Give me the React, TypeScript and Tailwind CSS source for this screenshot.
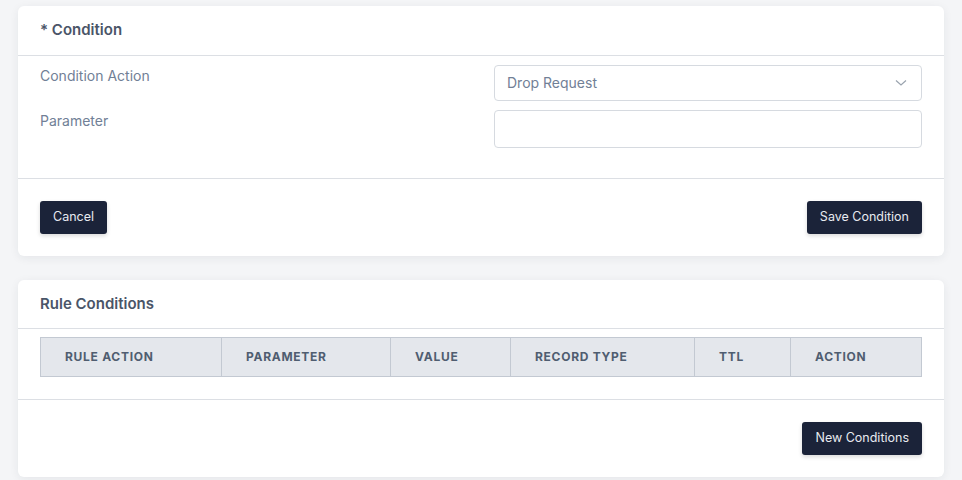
import React from "react";

const font = { fontFamily: 'Inter, "Noto Sans", sans-serif' };

function Btn({ children }: { children: React.ReactNode }) {
  return (
    <button className="h-[33px] px-[13px] rounded-[3px] bg-[#1b2339] text-[12.5px] text-[#e8eaf0] shadow-[0_2px_4px_rgba(0,0,0,0.15)]">
      {children}
    </button>
  );
}

export default function App() {
  const cols = [
    { t: "RULE ACTION", w: "w-[181px]" },
    { t: "PARAMETER", w: "w-[169px]" },
    { t: "VALUE", w: "w-[120px]" },
    { t: "RECORD TYPE", w: "w-[184px]" },
    { t: "TTL", w: "w-[96px]" },
    { t: "ACTION", w: "flex-1" },
  ];
  return (
    <div className="min-h-[480px] w-[962px] bg-[#f4f5f7] pt-[6px] px-[18px]" style={font}>
      <div className="bg-white rounded-[6px] shadow-[0_2px_10px_rgba(30,40,60,0.07)]">
        <div className="h-[50px] px-[22px] flex items-center border-b border-[#dcdfe4]">
          <span className="text-[15px] font-semibold text-[#4a5568]">* Condition</span>
        </div>
        <div className="px-[22px] pt-[9px] pb-[30px] flex flex-col gap-[9px]">
          <div className="flex items-start">
            <div className="w-[454px] text-[14px] text-[#718096]">Condition Action</div>
            <div className="flex-1 h-[36px] border border-[#d6dae0] rounded-[4px] flex items-center justify-between pl-[12px] pr-[14px]">
              <span className="text-[14px] text-[#718096] -mt-[1px]">Drop Request</span>
              <svg width="12" height="8" viewBox="0 0 12 8" fill="none">
                <path d="M1 1.5 L6 6 L11 1.5" stroke="#9aa3ae" strokeWidth="1.2" />
              </svg>
            </div>
          </div>
          <div className="flex items-start">
            <div className="w-[454px] text-[14px] text-[#718096]">Parameter</div>
            <div className="flex-1 h-[38px] border border-[#d6dae0] rounded-[4px]" />
          </div>
        </div>
        <div className="border-t border-[#dcdfe4] px-[22px] pt-[22px] pb-[22px] flex justify-between">
          <Btn>Cancel</Btn>
          <Btn>Save Condition</Btn>
        </div>
      </div>

      <div className="mt-[24px] bg-white rounded-[6px] shadow-[0_2px_10px_rgba(30,40,60,0.07)]">
        <div className="h-[49px] px-[22px] flex items-center border-b border-[#dcdfe4]">
          <span className="text-[15px] font-semibold text-[#4a5568]">Rule Conditions</span>
        </div>
        <div className="px-[22px] pt-[8px] pb-[22px] border-b border-[#dcdfe4]">
          <div className="flex h-[40px] bg-[#e4e7ec] border border-[#c3c9d2]">
            {cols.map((c, i) => (
              <div
                key={c.t}
                className={`${c.w} flex items-center pl-[24px] text-[12px] font-bold tracking-[0.06em] text-[#4f5d70] ${i < cols.length - 1 ? "border-r border-[#c3c9d2]" : ""}`}
              >
                {c.t}
              </div>
            ))}
          </div>
        </div>
        <div className="px-[22px] pt-[22px] pb-[22px] flex justify-end">
          <Btn>New Conditions</Btn>
        </div>
      </div>
    </div>
  );
}
